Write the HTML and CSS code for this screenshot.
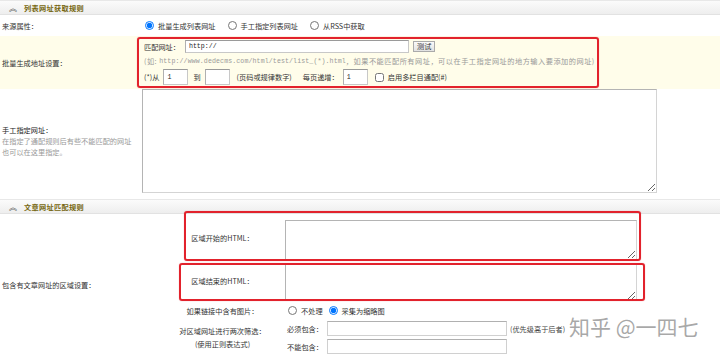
FILE: index.html
```html
<!DOCTYPE html>
<html lang="zh-CN">
<head>
    <meta charset="UTF-8">
    <title>采集规则设置</title>
    <link rel="stylesheet" href="styles.css">
</head>
<body>
    <div class="page">
        <!-- 列表网址获取规则 -->
        <div class="bar"><span class="fold">&#xFE3D;</span><span class="bar-title">列表网址获取规则</span></div>

        <div class="row row-src">
            <div class="label">来源属性：</div>
            <div class="field options">
                <label class="opt"><input type="radio" name="source" checked>批量生成列表网址</label>
                <label class="opt"><input type="radio" name="source">手工指定列表网址</label>
                <label class="opt"><input type="radio" name="source">从RSS中获取</label>
            </div>
        </div>

        <div class="row row-batch">
            <div class="label">批量生成地址设置：</div>
            <div class="mark mark-batch">
                <div class="line">
                    <span>匹配网址：</span>
                    <input type="text" class="txt txt-url" value="http://">
                    <button class="btn">测试</button>
                </div>
                <div class="line hint">(如:&nbsp;<span class="mono">http://www.dedecms.com/html/test/list_(*).html</span>，如果不能匹配所有网址，可以在手工指定网址的地方输入要添加的网址)</div>
                <div class="line line-page">
                    <span>(*)从</span>
                    <input type="text" class="txt txt-num" value="1">
                    <span class="to">到</span>
                    <input type="text" class="txt txt-num">
                    <span class="note">(页码或规律数字)</span>
                    <span class="step">每页递增：</span>
                    <input type="text" class="txt txt-num" value="1">
                    <label class="check"><input type="checkbox">启用多栏目通配(#)</label>
                </div>
            </div>
        </div>

        <div class="row row-manual">
            <div class="label label-multi">
                <div class="label-main">手工指定网址：</div>
                <div class="label-sub">在指定了通配规则后有些不能匹配的网址</div>
                <div class="label-sub">也可以在这里指定。</div>
            </div>
            <div class="field">
                <textarea class="area area-manual"></textarea>
            </div>
        </div>

        <!-- 文章网址匹配规则 -->
        <div class="bar"><span class="fold">&#xFE3D;</span><span class="bar-title">文章网址匹配规则</span></div>

        <div class="article">
            <div class="main-label">包含有文章网址的区域设置：</div>

            <div class="sub-label">区域开始的HTML：</div>
            <div class="sub-field"><textarea class="area area-start"></textarea></div>

            <div class="sub-label">区域结束的HTML：</div>
            <div class="sub-field"><textarea class="area area-end"></textarea></div>

            <div class="sub-label">如果链接中含有图片：</div>
            <div class="sub-field options">
                <label class="opt"><input type="radio" name="pic">不处理</label>
                <label class="opt"><input type="radio" name="pic" checked>采集为缩略图</label>
            </div>

            <div class="sub-label sub-label-two">
                <div>对区域网址进行两次筛选：</div>
                <div>(使用正则表达式)</div>
            </div>
            <div class="sub-field filters">
                <div class="filter">
                    <span>必须包含：</span>
                    <input type="text" class="txt txt-filter">
                    <span class="prio">(优先级高于后者)</span>
                </div>
                <div class="filter">
                    <span>不能包含：</span>
                    <input type="text" class="txt txt-filter">
                </div>
            </div>

            <!-- annotation boxes drawn over the form -->
            <div class="mark-over mark-start"></div>
            <div class="mark-over mark-end"></div>
        </div>

        <div class="watermark">知乎 @一四七</div>
    </div>
</body>
</html>
```

FILE: styles.css
```css
body {
    margin: 0;
    padding: 0;
    background-color: #fff;
    font-family: "Noto Sans CJK SC", sans-serif;
    font-size: 7.2px;
    color: #333;
}

.page {
    position: relative;
    width: 720px;
    height: 358px;
    overflow: hidden;
}

input, button, textarea {
    font-family: inherit;
    font-size: inherit;
    margin: 0;
}

.bar {
    height: 15px;
    display: flex;
    align-items: center;
    padding-left: 9px;
    background: linear-gradient(#fbfbfb, #eeeeee);
    border-top: 1px solid #e8e8e8;
    border-bottom: 1px solid #e2e2e2;
    box-sizing: border-box;
}

.fold {
    font-size: 8px;
    color: #555;
    margin-right: 7px;
}

.bar-title {
    color: #75650e;
    font-weight: bold;
    letter-spacing: 0.3px;
}

.row {
    display: flex;
    align-items: center;
}

.label {
    width: 137px;
    flex-shrink: 0;
    padding-left: 2px;
    box-sizing: border-box;
}

.field {
    padding-left: 5px;
}

.row-src {
    height: 21px;
}

.options {
    display: flex;
    align-items: center;
}

.opt {
    display: flex;
    align-items: center;
    margin-right: 9px;
}

input[type="radio"],
input[type="checkbox"] {
    width: 9px;
    height: 9px;
    margin: 0 4px 0 3px;
}

.row-batch {
    height: 53px;
    background-color: #fffdea;
}

.mark {
    border: 2px solid #e2222c;
    border-radius: 3px;
    box-shadow: 0 0 1px rgba(226, 34, 44, 0.5);
}

.mark-batch {
    width: 462px;
    height: 51px;
    box-sizing: border-box;
    padding: 1px 5px 0 5px;
    display: flex;
    flex-direction: column;
}

.line {
    display: flex;
    align-items: center;
}

.txt {
    border: 1px solid #c8c8c8;
    border-top-color: #9a9a9a;
    border-left-color: #b0b0b0;
    background-color: #fff;
    padding: 0 3px;
    box-sizing: border-box;
    color: #222;
}

.txt-url {
    width: 224px;
    height: 13px;
    margin-left: 5px;
    font-family: "Liberation Mono", monospace;
    font-size: 6.6px;
}

.btn {
    height: 11px;
    margin-left: 4px;
    padding: 0 3px;
    line-height: 9px;
    border: 1px solid #aaa;
    background: linear-gradient(#fafafa, #e2e2e2);
    color: #333;
}

.hint {
    height: 16px;
    color: #999;
    white-space: nowrap;
    letter-spacing: 0.5px;
}

.mono {
    font-family: "Liberation Mono", monospace;
    font-size: 6.6px;
    letter-spacing: 0.1px;
}

.txt-num {
    width: 25px;
    height: 16px;
    margin-left: 4px;
    font-family: "Liberation Mono", monospace;
    font-size: 6.6px;
}

.to {
    margin-left: 5px;
}

.note {
    margin-left: 7px;
}

.step {
    margin-left: 11px;
}

.check {
    display: flex;
    align-items: center;
    margin-left: 4px;
}

.row-manual {
    height: 110px;
    align-items: flex-start;
}

.label-multi {
    padding-top: 36px;
    line-height: 11px;
}

.label-main {
    color: #222;
}

.label-sub {
    color: #999;
}

.area {
    display: block;
    border: 1px solid #d4d4d4;
    border-top-color: #b4b4b4;
    border-left-color: #b4b4b4;
    box-sizing: border-box;
    resize: both;
    background-color: #fff;
}

.area-manual {
    width: 515px;
    height: 104px;
}

/* 文章网址匹配规则 */
.article {
    position: relative;
    display: grid;
    grid-template-columns: 160px 125px 1fr;
    grid-template-rows: 47px 40px 19px 35px;
    align-items: center;
}

.main-label {
    grid-column: 1;
    grid-row: 1 / 5;
    padding-left: 2px;
}

.sub-label {
    grid-column: 2;
    text-align: center;
}

.sub-label-two {
    line-height: 13px;
    padding-top: 1px;
}

.sub-field {
    grid-column: 3;
}

.area-start {
    width: 352px;
    height: 40px;
    margin-top: 4px;
}

.area-end {
    width: 352px;
    height: 37px;
    margin-top: 2px;
}

.sub-field.options .opt {
    margin-right: 3px;
}

.filters {
    display: flex;
    flex-direction: column;
    gap: 3px;
    padding-left: 2px;
}

.filter {
    display: flex;
    align-items: center;
}

.txt-filter {
    width: 180px;
    height: 15px;
    margin-left: 4px;
    border-color: #d0d0d0;
    border-top-color: #b0b0b0;
}

.prio {
    margin-left: 3px;
    color: #444;
}

.mark-over {
    position: absolute;
    border: 2px solid #e2222c;
    border-radius: 3px;
    box-shadow: 0 0 1px rgba(226, 34, 44, 0.5);
    box-sizing: border-box;
}

.mark-start {
    left: 184px;
    top: -3px;
    width: 457px;
    height: 50px;
}

.mark-end {
    left: 179px;
    top: 49px;
    width: 466px;
    height: 38px;
}

.watermark {
    position: absolute;
    left: 569px;
    top: 311px;
    font-size: 21px;
    color: rgba(140, 140, 140, 0.75);
    white-space: nowrap;
}
```
